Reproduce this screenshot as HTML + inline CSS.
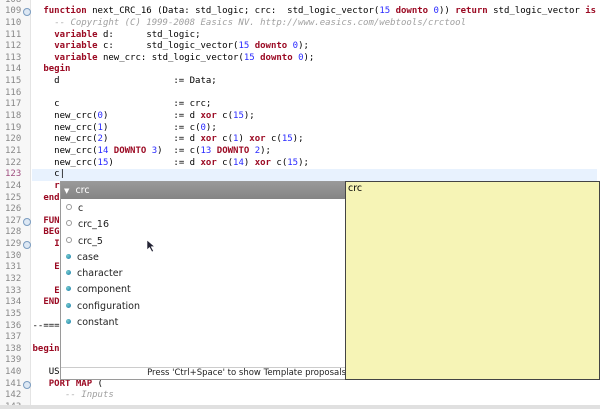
<!DOCTYPE html><html><head><style>
body{margin:0;width:600px;height:409px;overflow:hidden;background:#fff;position:relative;font-family:"DejaVu Sans Mono","Liberation Mono",monospace}
.g{position:absolute;left:0;top:0;width:30px;height:405px;background:#f7f7f7;border-right:1px solid #e4e4e4}
.ln{position:absolute;left:5px;font-size:9px;color:#888;line-height:11.64px}
.code{position:absolute;left:32.5px;top:-5.4px;font-size:9px;line-height:11.64px;white-space:pre;color:#000}
.k{color:#9b0a23;font-weight:bold}.n{color:#2a2aff}.c{color:#a0a0a0;font-style:italic}
.cur{position:absolute;left:32px;top:169px;width:565px;height:12px;background:#e8f2fe}
.pop{position:absolute;left:60px;top:181px;width:289px;height:199px;background:#fff;border:1px solid #9a9a9a;box-sizing:border-box;font-family:"DejaVu Sans","Liberation Sans",sans-serif;font-size:9.5px}
.hd{height:17px;background:linear-gradient(#999,#848484);color:#fff;line-height:17px}
.it{position:absolute;left:5px;height:16px;line-height:16px;color:#222}
.dot{display:inline-block;width:5px;height:5px;border-radius:50%;margin-right:6px;vertical-align:1px}
.o{border:1px solid #999;width:4px;height:4px;background:#fff}
.b{background:radial-gradient(circle at 35% 35%,#7cc,#17a)}
.ft{position:absolute;left:0;right:0;bottom:0;height:11px;border-top:1px solid #ccc;font-size:8.5px;text-align:right;line-height:11px;color:#222;padding-right:2px}
.y{position:absolute;left:345px;top:181px;width:255px;height:199px;background:#f6f4b6;border:1px solid #444;box-sizing:border-box;font-family:"DejaVu Sans",sans-serif;font-size:9.5px;padding:1px 2px}
.fold{position:absolute;left:23px;width:6px;height:6px;border-radius:50%;border:1px solid #7a9cc0;background:#dde8f4}
</style></head><body>
<div class="g"></div>
<div class="cur"></div>
<div class="ln" style="top:-5.4px">108<br>109<br>110<br>111<br>112<br>113<br>114<br>115<br>116<br>117<br>118<br>119<br>120<br>121<br>122<br><span style="color:#a05080">123</span><br>124<br>125<br>126<br>127<br>128<br>129<br>130<br>131<br>132<br>133<br>134<br>135<br>136<br>137<br>138<br>139<br>140<br>141<br>142<br>143</div>
<div class="fold" style="top:8px"></div><div class="fold" style="top:218px"></div><div class="fold" style="top:241px"></div><div class="fold" style="top:381px"></div>
<div class="code">
  <span class="k">function</span> next_CRC_16 (Data: std_logic; crc:  std_logic_vector(<span class="n">15</span> <span class="k">downto</span> <span class="n">0</span>)) <span class="k">return</span> std_logic_vector <span class="k">is</span>
    <span class="c">-- Copyright (C) 1999-2008 Easics NV. http://www.easics.com/webtools/crctool</span>
    <span class="k">variable</span> d:      std_logic;
    <span class="k">variable</span> c:      std_logic_vector(<span class="n">15</span> <span class="k">downto</span> <span class="n">0</span>);
    <span class="k">variable</span> new_crc: std_logic_vector(<span class="n">15</span> <span class="k">downto</span> <span class="n">0</span>);
  <span class="k">begin</span>
    d                     := Data;

    c                     := crc;
    new_crc(<span class="n">0</span>)            := d <span class="k">xor</span> c(<span class="n">15</span>);
    new_crc(<span class="n">1</span>)            := c(<span class="n">0</span>);
    new_crc(<span class="n">2</span>)            := d <span class="k">xor</span> c(<span class="n">1</span>) <span class="k">xor</span> c(<span class="n">15</span>);
    new_crc(<span class="n">14</span> <span class="k">DOWNTO</span> <span class="n">3</span>)  := c(<span class="n">13</span> <span class="k">DOWNTO</span> <span class="n">2</span>);
    new_crc(<span class="n">15</span>)           := d <span class="k">xor</span> c(<span class="n">14</span>) <span class="k">xor</span> c(<span class="n">15</span>);
    c|
    <span class="k">return</span> new_crc;
  <span class="k">end</span> next_CRC_16;

  <span class="k">FUNCTION</span> x
  <span class="k">BEGIN</span>
    <span class="k">IF</span> x

    <span class="k">ELSE</span>

    <span class="k">END</span> <span class="k">IF</span>;
  <span class="k">END</span> x;

--==========================

<span class="k">begin</span>

   USxx
   <span class="k">PORT MAP</span> (
      <span class="c">-- Inputs</span>
        ..   ..
</div>
<div class="pop">
<div class="hd">&nbsp;<span style="font-size:7px">&#9660;</span>&nbsp; crc</div>
<div class="it" style="top:19px"><span class="dot o"></span>c</div>
<div class="it" style="top:35px"><span class="dot o"></span>crc_16</div>
<div class="it" style="top:52px"><span class="dot o"></span>crc_5</div>
<div class="it" style="top:68px"><span class="dot b"></span>case</div>
<div class="it" style="top:84px"><span class="dot b"></span>character</div>
<div class="it" style="top:100px"><span class="dot b"></span>component</div>
<div class="it" style="top:117px"><span class="dot b"></span>configuration</div>
<div class="it" style="top:133px"><span class="dot b"></span>constant</div>
<div class="ft">Press 'Ctrl+Space' to show Template proposals</div>
</div>
<svg style="position:absolute;left:146px;top:239px" width="10" height="14"><path d="M1 1 L1 11 L3.5 8.5 L6 13 L7.5 12 L5.2 7.8 L8.5 7.5 Z" fill="#223" stroke="#fff" stroke-width=".6"/></svg>
<div class="y">crc</div>
<div style="position:absolute;left:0;top:405px;width:600px;height:4px;background:#e0e0e0"></div>
</body></html>
